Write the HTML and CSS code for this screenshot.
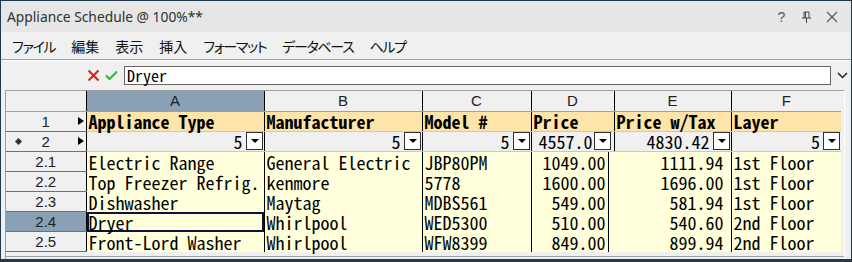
FILE: index.html
```html
<!DOCTYPE html>
<html>
<head>
<meta charset="utf-8">
<link rel="stylesheet" href="styles.css">
</head>
<body>
<div class="window">
  <div class="titlebar">
    <span class="title">Appliance Schedule @ 100%**</span>
    <div class="tb-buttons">
      <span class="tb-btn">?</span>
      <span class="tb-btn">
        <svg width="11" height="12" viewBox="0 0 11 12"><path d="M3 1h5M3 1v6M8 1v6M4.5 1v6M1 7h9M5.5 7v5" stroke="#444" stroke-width="1" fill="none"/></svg>
      </span>
      <span class="tb-btn">
        <svg width="12" height="12" viewBox="0 0 12 12"><path d="M1 1l10 10M11 1L1 11" stroke="#555" stroke-width="1.1" fill="none"/></svg>
      </span>
    </div>
  </div>
  <div class="menubar">
    <span class="menu kana">ファイル</span>
    <span class="menu">編集</span>
    <span class="menu">表示</span>
    <span class="menu">挿入</span>
    <span class="menu kana">フォーマット</span>
    <span class="menu kana">データベース</span>
    <span class="menu kana">ヘルプ</span>
  </div>
  <div class="formulabar">
    <svg class="fx-icon" width="13" height="13" viewBox="0 0 13 13"><path d="M1.5 1.5l10 10M11.5 1.5l-10 10" stroke="#e8201c" stroke-width="2.2" fill="none"/></svg>
    <svg class="fx-icon" width="13" height="13" viewBox="0 0 13 13"><path d="M1 6.5l3.5 3.5L12 2.5" stroke="#2fb52f" stroke-width="2" fill="none"/></svg>
    <div class="fx-input">Dryer</div>
    <svg class="fx-drop" width="11" height="7" viewBox="0 0 11 7"><path d="M1 1l4.5 4.5L10 1" stroke="#222" stroke-width="1.5" fill="none"/></svg>
  </div>
  <div class="gridwrap">
    <table class="grid">
      <colgroup>
        <col class="c-rh"><col class="c-a"><col class="c-b"><col class="c-c"><col class="c-d"><col class="c-e"><col class="c-f">
      </colgroup>
      <tr class="colhead">
        <th class="corner"></th>
        <th class="sel">A</th><th>B</th><th>C</th><th>D</th><th>E</th><th>F</th>
      </tr>
      <tr class="fields">
        <th class="rh"><span class="rnum">1</span><span class="arrow"></span></th>
        <td>Appliance Type</td><td>Manufacturer</td><td>Model #</td><td>Price</td><td>Price w/Tax</td><td>Layer</td>
      </tr>
      <tr class="summary">
        <th class="rh"><span class="diamond"></span><span class="rnum">2</span><span class="arrow"></span></th>
        <td><div class="sumcell"><span>5</span><span class="ddbtn"></span></div></td>
        <td><div class="sumcell"><span>5</span><span class="ddbtn"></span></div></td>
        <td><div class="sumcell"><span>5</span><span class="ddbtn"></span></div></td>
        <td><div class="sumcell narrow"><span>4557.0</span><span class="ddbtn"></span></div></td>
        <td><div class="sumcell"><span>4830.42</span><span class="ddbtn"></span></div></td>
        <td><div class="sumcell"><span>5</span><span class="ddbtn"></span></div></td>
      </tr>
      <tr class="data">
        <th class="rh">2.1</th>
        <td>Electric Range</td><td>General Electric</td><td>JBP80PM</td><td class="num d">1049.00</td><td class="num e">1111.94</td><td>1st Floor</td>
      </tr>
      <tr class="data">
        <th class="rh">2.2</th>
        <td>Top Freezer Refrig.</td><td>kenmore</td><td>5778</td><td class="num d">1600.00</td><td class="num e">1696.00</td><td>1st Floor</td>
      </tr>
      <tr class="data">
        <th class="rh">2.3</th>
        <td>Dishwasher</td><td>Maytag</td><td>MDBS561</td><td class="num d">549.00</td><td class="num e">581.94</td><td>1st Floor</td>
      </tr>
      <tr class="data">
        <th class="rh rsel">2.4</th>
        <td class="active">Dryer</td><td>Whirlpool</td><td>WED5300</td><td class="num d">510.00</td><td class="num e">540.60</td><td>2nd Floor</td>
      </tr>
      <tr class="data">
        <th class="rh">2.5</th>
        <td>Front-Lord Washer</td><td>Whirlpool</td><td>WFW8399</td><td class="num d">849.00</td><td class="num e">899.94</td><td>2nd Floor</td>
      </tr>
    </table>
  </div>
</div>
</body>
</html>
```

FILE: styles.css
```css
* { box-sizing: border-box; }
html, body { margin: 0; padding: 0; }
body {
  width: 852px;
  height: 262px;
  background: #1f3a4e;
  overflow: hidden;
}
.window {
  margin: 1px 1px 0 1px;
  height: 258px;
  background: #f0f0f0;
  display: flex;
  flex-direction: column;
}
.titlebar {
  height: 31px;
  flex: none;
  background: #e6e6e6;
  display: flex;
  align-items: center;
  justify-content: space-between;
  padding: 0 0 0 6px;
}
.title {
  font-family: "Noto Sans", "Liberation Sans", sans-serif;
  font-size: 13.8px;
  color: #303030;
}
.tb-buttons {
  display: flex;
  align-items: center;
  padding-right: 7px;
}
.tb-btn {
  width: 25px;
  display: flex;
  justify-content: center;
  align-items: center;
  font-family: "Liberation Sans", sans-serif;
  font-size: 14px;
  color: #555;
}
.menubar {
  height: 28px;
  flex: none;
  display: flex;
  align-items: center;
  padding-left: 11px;
  gap: 16px;
  font-family: "Noto Sans CJK JP", sans-serif;
  font-size: 14px;
  font-feature-settings: "palt";
  color: #111;
  border-bottom: 1px solid #a0a0a0;
}
.menu { line-height: 20px; }
.menu.kana { letter-spacing: -1.3px; }
.formulabar {
  height: 30px;
  flex: none;
  display: flex;
  align-items: center;
  padding-left: 86px;
  border-top: 1px solid #fbfbfb;
}
.fx-icon { margin-right: 5px; flex: none; }
.fx-input {
  margin-left: 1px;
  width: 707px;
  height: 19px;
  border: 1px solid #646464;
  background: #fff;
  font-family: "Noto Sans Mono CJK JP", "Liberation Mono", monospace;
  font-size: 16px;
  font-weight: 300;
  line-height: 17px;
  padding-left: 2px;
  color: #000;
}
.fx-drop { margin-left: 6px; }
.gridwrap {
  margin: 0 6px 0 4px;
  flex: 1;
  border: 1px solid #a0a0a0;
  border-right-color: #fff;
  border-bottom: none;
  background: #f0f0f0;
  overflow: hidden;
  position: relative;
}
.gridwrap::after {
  content: "";
  position: absolute;
  left: 0;
  right: 0;
  bottom: 2px;
  height: 1px;
  background: #a0a0a0;
}
.grid {
  border-collapse: collapse;
  table-layout: fixed;
  width: 835px;
  font-family: "Noto Sans Mono CJK JP", "Liberation Mono", monospace;
  font-size: 18px;
}
.c-rh { width: 80px; }
.c-a { width: 178px; }
.c-b { width: 158px; }
.c-c { width: 109px; }
.c-d { width: 83px; }
.c-e { width: 117px; }
.c-f { width: 110px; }
.grid th, .grid td {
  padding: 0;
  white-space: nowrap;
  vertical-align: middle;
}
.colhead th {
  background: #f0f0f0;
  font-family: "Liberation Sans", sans-serif;
  font-weight: normal;
  font-size: 15px;
  color: #222;
  text-align: center;
  border-left: 1px solid #000;
  border-bottom: 1px solid #a0a0a0;
  line-height: 19px;
  height: 20px;
}
.colhead th.corner { border-left: none; }
.colhead th.sel { background: #8aa0b4; }
.grid tr.fields td, .grid tr.summary td, .grid tr.data td {
  border-left: 1px solid #000;
  color: #000;
}
.fields td {
  background: #fde4a8;
  font-weight: bold;
  padding-left: 2px !important;
  border-bottom: 1px solid #c8c8c8;
  height: 20px;
  line-height: 19px;
}
.summary td {
  background: #f0f0f0;
  border-bottom: 1px solid #c8c8c8;
  height: 20px;
  line-height: 19px;
  font-weight: 300;
}
.sumcell {
  display: flex;
  justify-content: flex-end;
  align-items: center;
  gap: 3px;
  padding-right: 1px;
  height: 19px;
}
.sumcell.narrow { padding-right: 3px; gap: 1px; }
.ddbtn {
  flex: none;
  width: 17px;
  height: 18px;
  background: #fff;
  border: 1px solid #303030;
  position: relative;
}
.ddbtn::after {
  content: "";
  position: absolute;
  left: 4px;
  top: 6px;
  border-left: 4px solid transparent;
  border-right: 4px solid transparent;
  border-top: 4px solid #000;
}
.data td {
  background: #ffffdc;
  padding-left: 2px !important;
  height: 20px;
  line-height: 20px;
  font-weight: 300;
}
.data td.num {
  text-align: right;
  padding-left: 0 !important;
  padding-right: 7px !important;
}
.data td.d {
  padding-right: 8px !important;
  box-shadow: inset -5px 0 0 #ffffdc, inset -6px 0 0 #000;
}
.grid .data td.e { border-left-color: #ffffdc; }
.data td.active {
  box-shadow: inset 0 0 0 2px #10103a;
}
.grid th.rh {
  background: #f0f0f0;
  font-family: "Liberation Sans", sans-serif;
  font-weight: normal;
  font-size: 15px;
  color: #222;
  text-align: center;
  border-bottom: 1px solid #707070;
  height: 20px;
  line-height: 19px;
  position: relative;
}
.grid th.rsel { background: #8aa0b4; }
.arrow {
  position: absolute;
  right: 2px;
  top: 5px;
  width: 0;
  height: 0;
  border-left: 6px solid #000;
  border-top: 4.5px solid transparent;
  border-bottom: 4.5px solid transparent;
}
.diamond {
  position: absolute;
  left: 10px;
  top: 7px;
  width: 5px;
  height: 5px;
  background: #333;
  transform: rotate(45deg);
}
```
